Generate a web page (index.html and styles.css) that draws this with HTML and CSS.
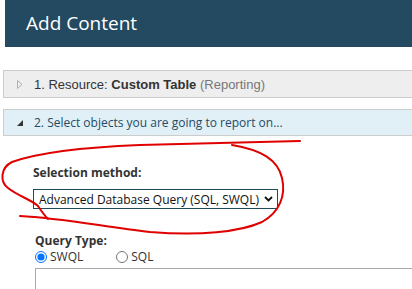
FILE: index.html
```html
<!DOCTYPE html>
<html lang="en">
  <head>
    <meta charset="UTF-8" />
    <meta name="viewport" content="width=device-width, initial-scale=1.0" />
    <title>Add Content</title>
    <link rel="stylesheet" href="styles.css">
  </head>
  <body>
    <div class="header">Add Content</div>

    <!-- Wizard steps -->
    <div class="steps">
      <div class="step step-closed">
        <svg class="step-icon" width="6" height="9" viewBox="0 0 6 9">
          <path d="M0.5 0.5 L5 4.5 L0.5 8.5 Z" fill="none" stroke="#b0b0b0" stroke-width="1" />
        </svg>
        <span class="step-text">1. Resource: <b>Custom Table</b> <span class="muted">(Reporting)</span></span>
      </div>
      <div class="step step-open">
        <svg class="step-icon" width="6" height="6" viewBox="0 0 6 6">
          <path d="M6 0 L6 6 L0 6 Z" fill="#333" />
        </svg>
        <span class="step-text">2. Select objects you are going to report on...</span>
      </div>
    </div>

    <div class="content">
      <div class="field-label">Selection method:</div>
      <div class="select">
        <span>Advanced Database Query (SQL, SWQL)</span>
        <svg width="9" height="6" viewBox="0 0 9 6">
          <path d="M1 1 L4.5 4.5 L8 1" fill="none" stroke="#111" stroke-width="1.8" />
        </svg>
      </div>

      <div class="query">
        <div class="field-label">Query Type:</div>
        <div class="radios">
          <label class="radio"><input type="radio" name="qtype" checked />SWQL</label>
          <label class="radio"><input type="radio" name="qtype" />SQL</label>
        </div>
        <div class="query-box"></div>
      </div>
    </div>

    <!-- hand drawn annotation -->
    <svg class="scribble" width="412" height="289" viewBox="0 0 412 289">
      <path d="M300 141 C260 142 200 143 140 145 C90 147 40 152 12 162 C0 168 0 182 8 188 C18 196 32 200 38 206 C42 212 45 216 48 219" />
      <path d="M20 216 C60 218 100 226 150 232 C200 236 240 232 262 222 C280 212 286 195 282 178 C278 160 262 150 232 145" />
    </svg>
  </body>
</html>
```

FILE: styles.css
```css
body {
  margin: 0;
  overflow: hidden;
  height: 289px;
  background-color: #fff;
  color: #333;
  font-family: "Open Sans", sans-serif;
  position: relative;
}
.header {
  margin-left: 5px;
  height: 47px;
  line-height: 46px;
  padding-left: 21px;
  background-color: #234a61;
  color: #fff;
  font-size: 19px;
}
.steps {
  margin-top: 23px;
  padding-left: 3px;
}
.step {
  display: flex;
  align-items: center;
  border: 1px solid #ccc;
  border-right: none;
  padding-left: 13px;
  white-space: nowrap;
}
.step-icon {
  margin-right: 11px;
}
.step-closed {
  height: 26px;
  background-color: #eeeeee;
  font-family: "Liberation Sans", Arial, sans-serif;
  font-size: 13px;
  color: #333;
}
.step-closed .muted {
  color: #777;
}
.step-open {
  height: 25px;
  margin-top: 11px;
  background-color: #e1f0f6;
  font-size: 12px;
  color: #1f4b68;
}
.content {
  padding-left: 33px;
  padding-top: 28px;
}
.field-label {
  font-weight: bold;
  font-size: 12px;
  line-height: 17px;
}
.select {
  display: flex;
  justify-content: space-between;
  align-items: center;
  box-sizing: border-box;
  width: 245px;
  height: 20px;
  margin-top: 8px;
  padding: 0 4px 0 5px;
  border: 1px solid #1f4a5c;
  font-size: 12px;
  color: #111;
  white-space: nowrap;
}
.query {
  padding-left: 2px;
  margin-top: 23px;
}
.radios {
  display: flex;
  gap: 33px;
  font-size: 12px;
  line-height: 15px;
}
.radio {
  display: flex;
  align-items: center;
}
.radio input {
  margin: 0 3px 0 0;
  width: 12px;
  height: 12px;
}
.query-box {
  margin-top: 4px;
  height: 30px;
  border: 1px solid #aaa;
  border-right: none;
}
.scribble {
  position: absolute;
  top: 0;
  left: 0;
  pointer-events: none;
}
.scribble path {
  fill: none;
  stroke: #e00000;
  stroke-width: 2;
  stroke-linecap: round;
}
```
